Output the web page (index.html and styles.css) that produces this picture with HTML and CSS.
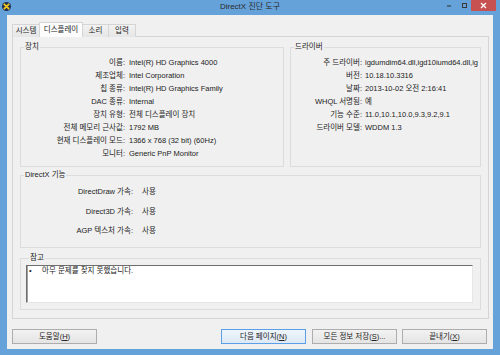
FILE: index.html
```html
<!DOCTYPE html>
<html lang="ko">
<head>
<meta charset="utf-8">
<title>DirectX 진단 도구</title>
<link rel="stylesheet" href="styles.css">
</head>
<body>
<div class="window">
  <div class="titlebar">
    <div class="tb-left">
      <svg class="app-icon" width="9" height="9" viewBox="0 0 9 9">
        <circle cx="4.5" cy="4.5" r="4.5" fill="#22304f"/>
        <path d="M2.3 2.3 L6.7 6.7 M6.7 2.3 L2.3 6.7" stroke="#f2c81c" stroke-width="1.8" stroke-linecap="round"/>
      </svg>
    </div>
    <div class="tb-title">DirectX 진단 도구</div>
    <div class="tb-right">
      <span class="tb-btn tb-min"><svg width="12" height="11" viewBox="0 0 12 11"><rect x="4" y="5.5" width="4" height="1" fill="#2d2d2d"/></svg></span>
      <span class="tb-btn tb-max"><svg width="12" height="11" viewBox="0 0 12 11"><rect x="4.5" y="3.5" width="4" height="4" fill="none" stroke="#3a3a3a" stroke-width="1"/></svg></span>
      <span class="tb-btn tb-close"><svg width="25" height="11" viewBox="0 0 25 11"><path d="M10 3 L15 8 M15 3 L10 8" stroke="#ffffff" stroke-width="1.3"/></svg></span>
    </div>
  </div>

  <div class="client">
    <div class="tabs">
      <div class="tab t1">시스템</div>
      <div class="tab t2 selected">디스플레이</div>
      <div class="tab t3">소리</div>
      <div class="tab t4">입력</div>
    </div>

    <div class="panel">
      <div class="top-row">
        <fieldset class="group device">
          <legend>장치</legend>
          <div class="rows">
            <span class="lbl">이름:</span><span class="val">Intel(R) HD Graphics 4000</span>
            <span class="lbl">제조업체:</span><span class="val">Intel Corporation</span>
            <span class="lbl">칩 종류:</span><span class="val">Intel(R) HD Graphics Family</span>
            <span class="lbl">DAC 종류:</span><span class="val">Internal</span>
            <span class="lbl">장치 유형:</span><span class="val">전체 디스플레이 장치</span>
            <span class="lbl">전체 메모리 근사값:</span><span class="val">1792 MB</span>
            <span class="lbl">현재 디스플레이 모드:</span><span class="val">1366 x 768 (32 bit) (60Hz)</span>
            <span class="lbl">모니터:</span><span class="val">Generic PnP Monitor</span>
          </div>
        </fieldset>
        <fieldset class="group driver">
          <legend>드라이버</legend>
          <div class="rows">
            <span class="lbl">주 드라이버:</span><span class="val">igdumdim64.dll,igd10iumd64.dll,ig</span>
            <span class="lbl">버전:</span><span class="val">10.18.10.3316</span>
            <span class="lbl">날짜:</span><span class="val">2013-10-02 오전 2:16:41</span>
            <span class="lbl">WHQL 서명됨:</span><span class="val">예</span>
            <span class="lbl">기능 수준:</span><span class="val">11.0,10.1,10.0,9.3,9.2,9.1</span>
            <span class="lbl">드라이버 모델:</span><span class="val">WDDM 1.3</span>
          </div>
        </fieldset>
      </div>

      <fieldset class="group features">
        <legend>DirectX 기능</legend>
        <div class="rows">
          <span class="lbl">DirectDraw 가속:</span><span class="val">사용</span>
          <span class="lbl">Direct3D 가속:</span><span class="val">사용</span>
          <span class="lbl">AGP 텍스처 가속:</span><span class="val">사용</span>
        </div>
      </fieldset>

      <fieldset class="group notes">
        <legend>참고</legend>
        <div class="notebox">
          <div class="note"><span class="bullet">•</span><span>아무 문제를 찾지 못했습니다.</span></div>
        </div>
      </fieldset>
    </div>

    <div class="buttons">
      <button class="btn">도움말(<u>H</u>)</button>
      <button class="btn default push">다음 페이지(<u>N</u>)</button>
      <button class="btn">모든 정보 저장(<u>S</u>)...</button>
      <button class="btn">끝내기(<u>X</u>)</button>
    </div>
  </div>
</div>
</body>
</html>
```
FILE: styles.css
```css
* { box-sizing: border-box; }
html, body { margin: 0; padding: 0; }
body {
  width: 500px;
  height: 355px;
  overflow: hidden;
  background: #65a2da;
  font-family: "Liberation Sans", "Noto Sans CJK KR", sans-serif;
  font-size: 7.5px;
  color: #222;
}
.window {
  width: 500px;
  height: 355px;
  display: flex;
  flex-direction: column;
  background: #65a2da;
}
.titlebar {
  height: 15px;
  display: grid;
  grid-template-columns: 1fr auto 1fr;
  align-items: start;
}
.tb-left { padding: 2px 0 0 2px; display: flex; }
.app-icon { display: block; }
.tb-title {
  font-size: 8px;
  line-height: 14px;
  color: #2b2b2b;
}
.tb-right {
  justify-self: end;
  display: flex;
  padding-right: 4px;
}
.tb-btn { display: block; height: 11px; }
.tb-btn svg { display: block; }
.tb-min { margin-right: 3px; }
.tb-max { margin-right: 1px; }
.tb-close { background: #c75050; }

.client {
  margin: 0 7px 6px 7px;
  flex: 1;
  background: #f0f0f0;
  padding: 7px 6px 5px 5px;
  display: flex;
  flex-direction: column;
}
.tabs {
  display: flex;
  align-items: flex-end;
  height: 15px;
  margin-bottom: -1px;
  position: relative;
  z-index: 1;
}
.tab {
  height: 13px;
  line-height: 11px;
  text-align: center;
  border: 1px solid #d5d5d5;
  border-bottom: none;
  background: linear-gradient(#f2f2f2, #e6e6e6);
  color: #222;
  margin-left: -1px;
}
.t1 { width: 28px; margin-left: 0; }
.t2 { width: 44px; }
.t3 { width: 27px; }
.t4 { width: 28px; }
.tab.selected {
  height: 15px;
  line-height: 13px;
  background: #fcfcfc;
  position: relative;
  z-index: 2;
}

.panel {
  height: 283px;
  margin-right: -2px;
  border: 1px solid #d5d5d5;
  background: #f0f0f0;
  padding: 5px 7px 8px 7px;
  display: flex;
  flex-direction: column;
}
.top-row {
  display: flex;
  gap: 6px;
  height: 125px;
}
.group {
  margin: 0;
  min-width: 0;
  border: 1px solid #dcdcdc;
  padding: 0;
  background: #f0f0f0;
}
.group legend {
  font-size: 7.5px;
  line-height: 10px;
  padding: 0 1px;
  margin-left: 3px;
  color: #222;
}
.rows {
  display: grid;
  align-content: start;
}
.lbl { text-align: right; white-space: nowrap; }
.val { white-space: nowrap; }

.device { width: 264px; height: 125px; }
.device .rows {
  grid-template-columns: 104px 1fr;
  column-gap: 4px;
  line-height: 13px;
  padding-top: 3.5px;
}
.driver { flex: 1; height: 125px; }
.driver .rows {
  grid-template-columns: 71px 1fr;
  column-gap: 3px;
  line-height: 13px;
  padding-top: 3.5px;
  padding-right: 3px;
}

.features { height: 78px; margin-top: 3px; }
.features .rows {
  grid-template-columns: 112px 1fr;
  column-gap: 9px;
  line-height: 19.5px;
  padding-top: 2.25px;
}

.notes { height: 57px; margin-top: 5px; padding: 2px 7px 6px 5px; }
.notebox {
  height: 38px;
  background: #ffffff;
  border: 1px solid;
  border-color: #6e6e6e #e6e6e6 #e6e6e6 #6e6e6e;
  box-shadow: inset 1px 0 0 #a0a0a0;
}
.note {
  display: flex;
  line-height: 9px;
  color: #222;
}
.bullet { width: 15px; padding-left: 2px; }

.buttons {
  display: flex;
  margin-top: 10px;
  height: 15px;
}
.btn {
  width: 85px;
  height: 15px;
  padding: 0;
  margin: 0 0 0 6px;
  font-family: inherit;
  font-size: 7.5px;
  line-height: 13px;
  color: #222;
  border: 1px solid #adadad;
  border-radius: 0;
  background: linear-gradient(#f2f2f2, #e4e4e4);
}
.btn:first-child { margin-left: 0; }
.btn:last-child { margin-left: 5px; }
.btn.push { margin-left: auto; }
.btn.default { border-color: #5aa0e6; background: linear-gradient(#eef5fc, #dde9f5); }
```
